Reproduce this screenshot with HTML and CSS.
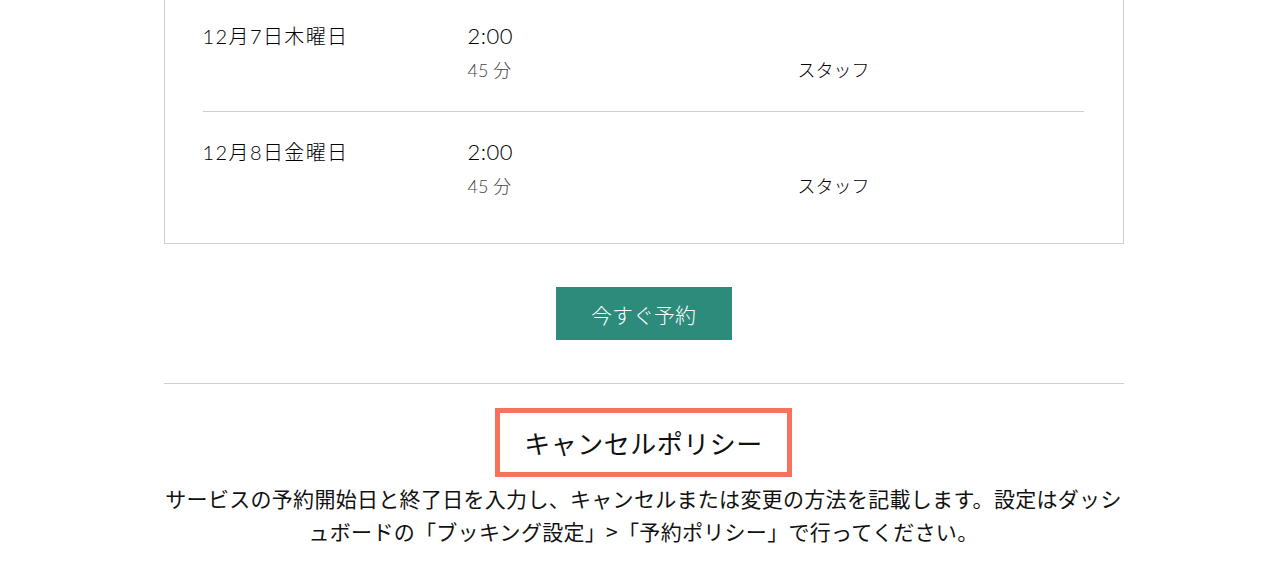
FILE: index.html
```html
<!DOCTYPE html>
<html lang="ja">
<head>
    <meta charset="UTF-8">
    <meta name="viewport" content="width=device-width, initial-scale=1.0">
    <title>サービス詳細</title>
    <link rel="stylesheet" href="styles.css">
</head>
<body>
    <div class="page">
        <div class="schedule">
            <div class="slot">
                <div class="slot-date">12月7日木曜日</div>
                <div class="slot-time">2:00</div>
                <div class="slot-length">45 分</div>
                <div class="slot-staff">スタッフ</div>
            </div>
            <div class="slot">
                <div class="slot-date">12月8日金曜日</div>
                <div class="slot-time">2:00</div>
                <div class="slot-length">45 分</div>
                <div class="slot-staff">スタッフ</div>
            </div>
        </div>

        <div class="actions">
            <button class="book-btn">今すぐ予約</button>
        </div>

        <hr class="divider">

        <div class="policy">
            <h2 class="policy-title">キャンセルポリシー</h2>
            <p class="policy-text">サービスの予約開始日と終了日を入力し、キャンセルまたは変更の方法を記載します。設定はダッシュボードの「ブッキング設定」&gt;「予約ポリシー」で行ってください。</p>
        </div>
    </div>
</body>
</html>
```

FILE: styles.css
```css
body {
    margin: 0;
    padding-left: 1px;
    background: #fff;
    color: #111;
    font-family: Lato, "Noto Sans CJK JP", sans-serif;
    font-weight: 300;
}
.page {
    width: 960px;
    margin: 0 auto;
}
.schedule {
    margin-top: -1px;
    border: 1px solid #cfcfcf;
    padding: 0 39px 16px 38px;
}
.slot {
    display: grid;
    grid-template-columns: 265px 330px 1fr;
    padding: 25px 0 28px;
    border-bottom: 1px solid #cfcfcf;
}
.slot:first-child {
    padding-top: 0;
    margin-top: -4px;
}
.slot:first-child .slot-date,
.slot:first-child .slot-time {
    padding-top: 25px;
}
.slot:last-child {
    border-bottom: none;
}
.slot-date {
    grid-row: 1;
    grid-column: 1;
    font-size: 20px;
    line-height: 30px;
    letter-spacing: 1.4px;
    color: #000;
}
.slot-time {
    grid-row: 1;
    grid-column: 2;
    font-size: 22px;
    line-height: 30px;
    letter-spacing: 0.5px;
    color: #000;
}
.slot-length {
    grid-row: 2;
    grid-column: 2;
    margin-top: 6px;
    font-size: 18px;
    line-height: 26px;
    color: #444;
}
.slot-staff {
    grid-row: 2;
    grid-column: 3;
    margin-top: 6px;
    font-size: 18px;
    line-height: 26px;
    color: #000;
}
.actions {
    display: flex;
    justify-content: center;
    margin-top: 43px;
}
.book-btn {
    width: 176px;
    height: 53px;
    border: none;
    background-color: #2d8b7b;
    color: #fff;
    font-family: "Noto Sans CJK JP", sans-serif;
    font-size: 21px;
    font-weight: 300;
    cursor: pointer;
}
.divider {
    margin: 43px 0 0;
    border: none;
    border-top: 1px solid #cfcfcf;
}
.policy {
    text-align: center;
    padding-top: 24px;
}
.policy-title {
    display: inline-block;
    margin: 0;
    padding: 0 24px;
    border: 5px solid #f4735a;
    font-family: "Noto Sans CJK JP", sans-serif;
    font-size: 26px;
    font-weight: 400;
    letter-spacing: 0.5px;
    line-height: 59px;
}
.policy-text {
    margin: 5px 0 0;
    font-family: "Noto Sans CJK JP", sans-serif;
    font-size: 21px;
    font-weight: 400;
    letter-spacing: 0.3px;
    line-height: 33px;
}
```
